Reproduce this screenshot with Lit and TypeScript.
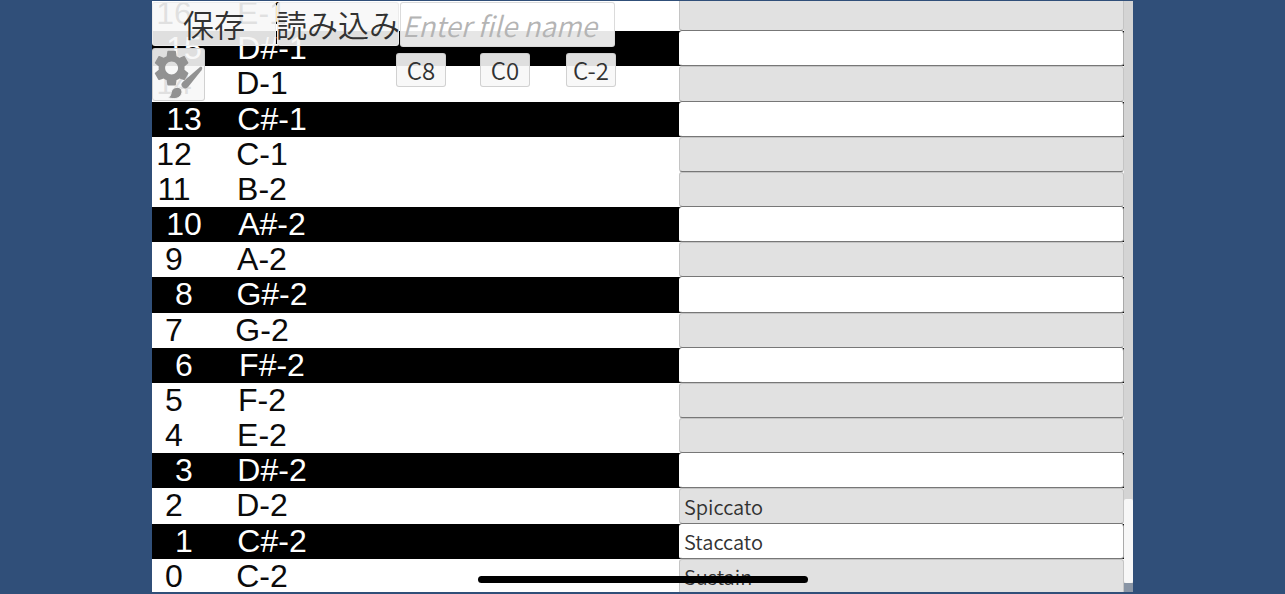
import { LitElement, html, css } from "lit";
import { customElement, property } from "lit/decorators.js";
import { classMap } from "lit/directives/class-map.js";

interface KeyRow {
  id: number;
  note: string;
  name: string;
}

const ARTICULATIONS: Record<number, string> = {
  0: "Sustain",
  1: "Staccato",
  2: "Spiccato",
};
const NOTES = ["C", "C#", "D", "D#", "E", "F", "F#", "G", "G#", "A", "A#", "B"];

const rows: KeyRow[] = Array.from({ length: 17 }, (_, i) => {
  const id = 16 - i;
  return {
    id,
    note: `${NOTES[id % 12]}${Math.floor(id / 12) - 2}`,
    name: ARTICULATIONS[id] ?? "",
  };
});

@customElement("key-row")
export class KeyRowElement extends LitElement {
  @property({ attribute: false }) row!: KeyRow;

  static styles = css`
    :host {
      display: block;
      min-height: 0;
    }
    .row {
      display: grid;
      grid-template-columns: 44px 132px 1fr 445px;
      grid-template-rows: 100%;
      height: 100%;
      box-sizing: border-box;
      background: #fff;
      color: #0a0a0a;
      font: 32px/35px "Liberation Sans", Arial, sans-serif;
    }
    .sharp {
      grid-template-columns: 64px 112px 1fr 445px;
      background: #000;
      color: #fff;
    }
    .num,
    .note {
      text-align: center;
      white-space: nowrap;
    }
    .field {
      grid-column: 4;
      min-width: 0;
      width: 100%;
      height: 100%;
      box-sizing: border-box;
      margin: 0;
      padding: 0 4px;
      border: 1px solid #c4c4c4;
      border-bottom-color: #777;
      border-radius: 3px;
      background: #e1e1e1;
      color: #323232;
      font: 350 20px/28px "Noto Sans CJK JP", sans-serif;
      outline: none;
    }
    .sharp .field {
      background: #fff;
      border-color: #fff #aaa #777 #fff;
    }
  `;

  render() {
    const { id, note, name } = this.row;
    return html`<div class=${classMap({ row: true, sharp: note.includes("#") })}>
      <span class="num">${id}</span>
      <label class="note" for="field">${note}</label>
      <input class="field" id="field" type="text" .value=${name} />
    </div>`;
  }
}

@customElement("app-root")
export class AppRoot extends LitElement {
  static styles = css`
    :host {
      display: block;
      height: 100vh;
      box-sizing: border-box;
      padding: 1px 152px 2px;
      overflow: hidden;
      background: #304f79;
      font-family: "Noto Sans CJK JP", sans-serif;
    }
    .panel {
      position: relative;
      display: grid;
      grid-template-columns: 1fr 9px;
      grid-template-rows: 100%;
      height: 100%;
      overflow: hidden;
    }
    .view {
      min-height: 0;
      overflow: hidden;
      display: flex;
      flex-direction: column;
    }
    .list {
      display: grid;
      grid-auto-rows: 1fr;
      flex: none;
      height: calc(100% + 7px);
      margin-top: -5px;
    }
    .track {
      display: flex;
      flex-direction: column;
      justify-content: flex-end;
      box-sizing: border-box;
      background: #d4d4d4;
      border-bottom: 9px solid #8995a5;
    }
    .thumb {
      height: 14.5%;
      background: #f7f7f7;
      border-radius: 2px;
    }
    .overlay {
      position: absolute;
      top: 1px;
      left: 0;
      display: flex;
      flex-direction: column;
      gap: 1px;
    }
    .bar {
      display: flex;
      gap: 1px;
    }
    .jumps {
      display: flex;
      align-items: flex-start;
    }
    button {
      box-sizing: border-box;
      margin: 0;
      padding: 0;
      border: 1px solid rgba(205, 205, 205, 0.9);
      border-radius: 3px;
      background: rgba(247, 247, 247, 0.9);
      color: #323232;
      font: 350 24px/32px "Noto Sans CJK JP", sans-serif;
      white-space: nowrap;
    }
    .file {
      display: flex;
      justify-content: center;
      align-items: center;
      width: 124px;
      height: 44px;
      border-color: rgba(235, 235, 235, 0.9);
      font-size: 31px;
      line-height: 44px;
    }
    .load {
      width: 122px;
    }
    .filename {
      box-sizing: border-box;
      width: 215px;
      height: 45px;
      margin: 0;
      padding: 0 1px;
      border: 1px solid rgba(215, 215, 215, 0.9);
      border-radius: 3px;
      background: rgba(255, 255, 255, 0.9);
      color: #323232;
      font: 350 28px/40px "Noto Sans CJK JP", sans-serif;
      outline: none;
    }
    .filename::placeholder {
      color: #b4b4b4;
      font-style: italic;
      opacity: 1;
    }
    .settings {
      width: 53px;
      height: 53px;
      margin-right: 191px;
    }
    .settings svg {
      display: block;
      width: 51px;
      height: 51px;
    }
    .jump {
      width: 50px;
      height: 34px;
      margin: 5px 34px 0 0;
    }
    .jump:last-child {
      margin-left: 2px;
      margin-right: 0;
    }
    .home {
      position: absolute;
      bottom: 9px;
      left: 50%;
      width: 330px;
      height: 7px;
      margin-left: -165px;
      border-radius: 4px;
      background: #000;
    }
  `;

  render() {
    return html`<main class="panel">
      <div class="view">
        <div class="list">
          ${rows.map((row) => html`<key-row .row=${row}></key-row>`)}
        </div>
      </div>
      <div class="track"><div class="thumb"></div></div>
      <div class="overlay">
        <div class="bar">
          <button class="file">保存</button>
          <button class="file load">読み込み</button>
          <input class="filename" type="text" aria-label="File name" placeholder="Enter file name" />
        </div>
        <div class="jumps">
          <button class="settings" aria-label="Settings">
            <svg viewBox="0 0 51 51" aria-hidden="true">
              <path
                fill="#929292"
                transform="translate(-3 -2.500) scale(1.800)"
                d="M19.140 12.940c.040-.300.060-.610.060-.940 0-.320-.020-.640-.070-.940l2.030-1.580c.180-.140.230-.410.120-.610l-1.920-3.320c-.120-.220-.370-.290-.590-.220l-2.390.960c-.500-.380-1.030-.700-1.620-.940l-.360-2.540c-.040-.240-.240-.410-.480-.410h-3.840c-.240 0-.430.170-.470.410l-.360 2.540c-.590.240-1.130.570-1.620.940l-2.390-.960c-.220-.080-.470 0-.590.220L2.740 8.870c-.120.210-.080.470.120.610l2.030 1.580c-.050.300-.090.630-.090.940s.020.640.070.940l-2.030 1.580c-.180.140-.230.410-.120.610l1.920 3.320c.120.220.370.290.590.220l2.390-.960c.500.380 1.030.700 1.620.940l.360 2.540c.050.240.240.410.480.410h3.840c.240 0 .440-.170.470-.410l.360-2.540c.590-.240 1.130-.560 1.620-.940l2.390.960c.220.080.470 0 .590-.220l1.920-3.320c.120-.220.070-.470-.120-.610l-2.010-1.580zM12 15.600c-1.980 0-3.600-1.620-3.600-3.600s1.620-3.600 3.600-3.600 3.600 1.620 3.600 3.600-1.620 3.600-3.600 3.600z"
              />
              <path
                fill="#929292"
                d="M47 18c2-1 3 1 1.500 3.200L35.500 37.500c-1.800 2.200-3.500 2.500-5.500 1-2-1.600-2.300-3.700-.3-5.500z"
              />
              <path
                fill="#929292"
                stroke="#f0f0f0"
                stroke-width="1"
                d="M23 38.500c4.500-.8 7 2.500 5.500 6.500-2 5-8 5.500-13.500 3.500 2.500-.700 2.700-2.700 3.200-5 .5-2.700 2.200-4.500 4.800-5z"
              />
            </svg>
          </button>
          <button class="jump">C8</button>
          <button class="jump">C0</button>
          <button class="jump">C-2</button>
        </div>
      </div>
      <div class="home"></div>
    </main>`;
  }
}
